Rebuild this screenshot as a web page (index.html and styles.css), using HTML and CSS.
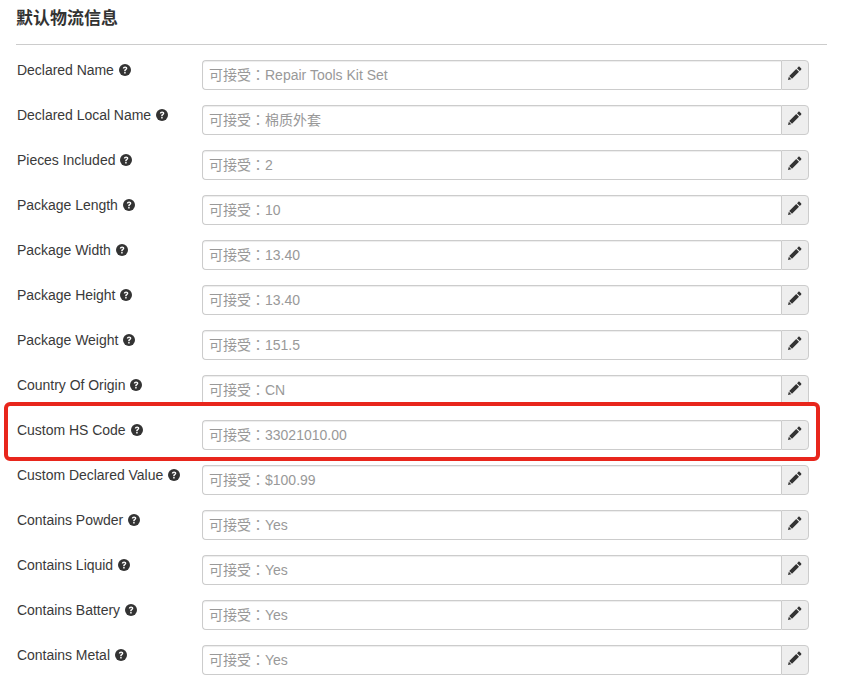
FILE: index.html
```html
<!DOCTYPE html>
<html lang="zh-TW">
<head>
<meta charset="utf-8">
<title>默认物流信息</title>
<link rel="stylesheet" href="styles.css">
</head>
<body>
<svg class="sprites" width="0" height="0" aria-hidden="true">
  <symbol id="q" viewBox="0 0 24 24"><circle cx="12" cy="12" r="12" fill="#333"/><path d="M7.6 9.2C7.8 6.6 9.6 5 12.2 5c2.6 0 4.4 1.5 4.4 3.7 0 1.600-.9 2.500-2 3.200-1 .6-1.300 1-1.300 1.900v.5h-2.900v-.8c0-1.500.6-2.300 1.800-3 1-.6 1.400-1 1.400-1.600 0-.7-.6-1.200-1.400-1.200-.9 0-1.500.6-1.600 1.500z M10.400 16h2.900v2.900h-2.900z" fill="#fff"/></symbol>
  <symbol id="pen" viewBox="0 0 14 14"><path d="M10.300.9c.4-.4 1-.4 1.400 0l1.400 1.400c.4.400.4 1 0 1.400l-1.300 1.300-2.800-2.800z M8.200 2.900 11 5.700 4 12.700 1.200 9.900z M.8 10.700 3.300 13.200 0 14z" fill="#333"/></symbol>
</svg>
<main class="panel">
  <h4 class="title" lang="zh-Hans">默认物流信息</h4>
  <div class="rows">
    <div class="row"><label class="label">Declared Name<svg class="help"><use href="#q"/></svg></label><div class="group"><input class="field" placeholder="可接受：Repair Tools Kit Set"><span class="addon"><svg class="pen"><use href="#pen"/></svg></span></div></div>
    <div class="row"><label class="label">Declared Local Name<svg class="help"><use href="#q"/></svg></label><div class="group"><input class="field" placeholder="可接受：棉质外套"><span class="addon"><svg class="pen"><use href="#pen"/></svg></span></div></div>
    <div class="row"><label class="label">Pieces Included<svg class="help"><use href="#q"/></svg></label><div class="group"><input class="field" placeholder="可接受：2"><span class="addon"><svg class="pen"><use href="#pen"/></svg></span></div></div>
    <div class="row"><label class="label">Package Length<svg class="help"><use href="#q"/></svg></label><div class="group"><input class="field" placeholder="可接受：10"><span class="addon"><svg class="pen"><use href="#pen"/></svg></span></div></div>
    <div class="row"><label class="label">Package Width<svg class="help"><use href="#q"/></svg></label><div class="group"><input class="field" placeholder="可接受：13.40"><span class="addon"><svg class="pen"><use href="#pen"/></svg></span></div></div>
    <div class="row"><label class="label">Package Height<svg class="help"><use href="#q"/></svg></label><div class="group"><input class="field" placeholder="可接受：13.40"><span class="addon"><svg class="pen"><use href="#pen"/></svg></span></div></div>
    <div class="row"><label class="label">Package Weight<svg class="help"><use href="#q"/></svg></label><div class="group"><input class="field" placeholder="可接受：151.5"><span class="addon"><svg class="pen"><use href="#pen"/></svg></span></div></div>
    <div class="row"><label class="label">Country Of Origin<svg class="help"><use href="#q"/></svg></label><div class="group"><input class="field" placeholder="可接受：CN"><span class="addon"><svg class="pen"><use href="#pen"/></svg></span></div></div>
    <div class="row highlighted"><label class="label">Custom HS Code<svg class="help"><use href="#q"/></svg></label><div class="group"><input class="field" placeholder="可接受：33021010.00"><span class="addon"><svg class="pen"><use href="#pen"/></svg></span></div></div>
    <div class="row"><label class="label">Custom Declared Value<svg class="help"><use href="#q"/></svg></label><div class="group"><input class="field" placeholder="可接受：$100.99"><span class="addon"><svg class="pen"><use href="#pen"/></svg></span></div></div>
    <div class="row"><label class="label">Contains Powder<svg class="help"><use href="#q"/></svg></label><div class="group"><input class="field" placeholder="可接受：Yes"><span class="addon"><svg class="pen"><use href="#pen"/></svg></span></div></div>
    <div class="row"><label class="label">Contains Liquid<svg class="help"><use href="#q"/></svg></label><div class="group"><input class="field" placeholder="可接受：Yes"><span class="addon"><svg class="pen"><use href="#pen"/></svg></span></div></div>
    <div class="row"><label class="label">Contains Battery<svg class="help"><use href="#q"/></svg></label><div class="group"><input class="field" placeholder="可接受：Yes"><span class="addon"><svg class="pen"><use href="#pen"/></svg></span></div></div>
    <div class="row"><label class="label">Contains Metal<svg class="help"><use href="#q"/></svg></label><div class="group"><input class="field" placeholder="可接受：Yes"><span class="addon"><svg class="pen"><use href="#pen"/></svg></span></div></div>
  </div>
</main>
</body>
</html>
```
FILE: styles.css
```css
*, *::after { box-sizing: border-box; }
html, body { margin: 0; height: 684px; overflow: hidden; background: #fff; }
body {
  font-family: "Liberation Sans", "Noto Sans CJK TC", sans-serif;
  font-size: 14px;
  color: #333;
}
.sprites { position: absolute; }
.panel { width: 827px; padding: 0 0 0 17px; }
.title {
  margin: 0 0 0 -1px;
  height: 45px;
  padding-top: 8px;
  font-family: "Liberation Sans", "Noto Sans CJK SC", sans-serif;
  font-size: 17px;
  line-height: 22px;
  font-weight: 700;
  border-bottom: 1px solid #ccc;
}
.rows { display: flex; flex-direction: column; gap: 15px; padding-top: 15px; }
.row { position: relative; display: flex; height: 30px; }
.label {
  width: 185px;
  flex: none;
  line-height: 20px;
  letter-spacing: -.03px;
  color: #3a3a3a;
  display: flex;
  align-items: flex-start;
}
.help { width: 12px; height: 12px; margin: 4px 0 0 5px; flex: none; }
.group { display: flex; width: 607px; height: 30px; }
.field {
  flex: 1;
  min-width: 0;
  height: 30px;
  padding: 0 6px;
  border: 1px solid #ccc;
  border-right: 0;
  border-radius: 4px 0 0 4px;
  font: 14px "Liberation Sans", "Noto Sans CJK TC", sans-serif;
  color: #333;
  outline: none;
  box-shadow: inset 0 1px 1px rgba(0,0,0,.075);
}
.field::placeholder { color: #999; opacity: 1; }
.addon {
  width: 28px;
  flex: none;
  display: flex;
  align-items: center;
  justify-content: center;
  background: #eee;
  border: 1px solid #ccc;
  border-radius: 0 4px 4px 0;
}
.pen { width: 14px; height: 14px; margin-bottom: 4px; }
.highlighted::after {
  content: "";
  position: absolute;
  left: -13px;
  top: -18px;
  width: 816px;
  height: 59px;
  border: 4px solid #e8261c;
  border-radius: 6px;
  pointer-events: none;
}
```
